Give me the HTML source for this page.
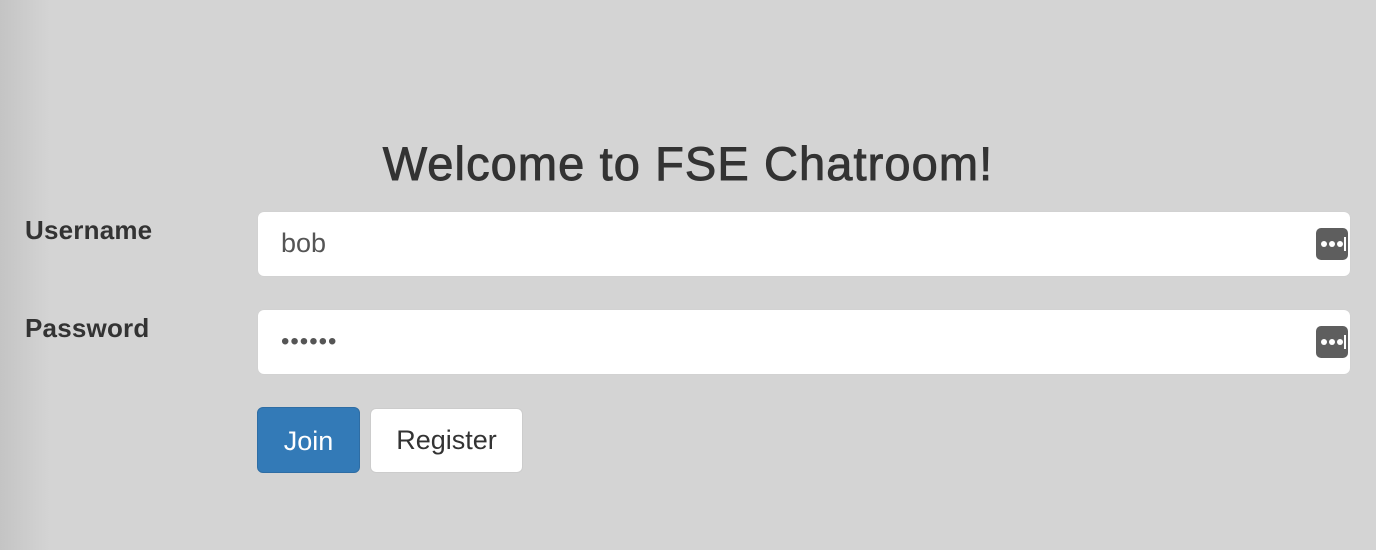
<!DOCTYPE html>
<html><head><style>
body{margin:0;width:1376px;height:550px;overflow:hidden;background:#d4d4d4;font-family:"Liberation Sans",sans-serif;position:relative}
.shade{position:absolute;left:0;top:0;width:50px;height:550px;background:linear-gradient(to right,#c4c4c4,#d4d4d4)}
h1{position:absolute;left:0;width:1376px;text-align:center;top:136px;margin:0;font-size:47px;font-weight:normal;color:#333;line-height:56px;-webkit-text-stroke:0.9px #333;letter-spacing:1.1px}
.lbl{position:absolute;left:25px;font-size:26px;font-weight:bold;color:#333;letter-spacing:0.2px}
.in{position:absolute;left:258px;width:1092px;height:64px;background:#fff;border-radius:6px;box-shadow:0 0 1px #c8c8c8}
.in span{position:absolute;left:23px;top:16px;font-size:27px;color:#555}
.ic{position:absolute;left:1058px;top:16px;width:32px;height:32px;background:#5e5e5e;border-radius:5px}
.ic i{position:absolute;top:13px;width:6px;height:6px;border-radius:50%;background:#fff}
.ic b{position:absolute;left:28px;top:9px;width:2px;height:14px;background:#fff}
.btn{position:absolute;top:407px;height:66px;border-radius:6px;font-size:27px;text-align:center;line-height:66px;box-sizing:border-box}
</style></head><body>
<div class="shade"></div>
<h1>Welcome to FSE Chatroom!</h1>
<div class="lbl" style="top:215px">Username</div>
<div class="lbl" style="top:313px">Password</div>
<div class="in" style="top:212px"><span>bob</span><div class="ic"><i style="left:5px"></i><i style="left:13px"></i><i style="left:21px"></i><b></b></div></div>
<div class="in" style="top:310px"><span style="top:18px;letter-spacing:1px;font-size:24px">••••••</span><div class="ic"><i style="left:5px"></i><i style="left:13px"></i><i style="left:21px"></i><b></b></div></div>
<div class="btn" style="left:257px;width:103px;background:#337ab7;border:1px solid #2e6da4;color:#fff">Join</div>
<div class="btn" style="left:370px;width:153px;top:408px;height:65px;background:#fff;border:1px solid #ccc;color:#333;line-height:63px">Register</div>
</body></html>
